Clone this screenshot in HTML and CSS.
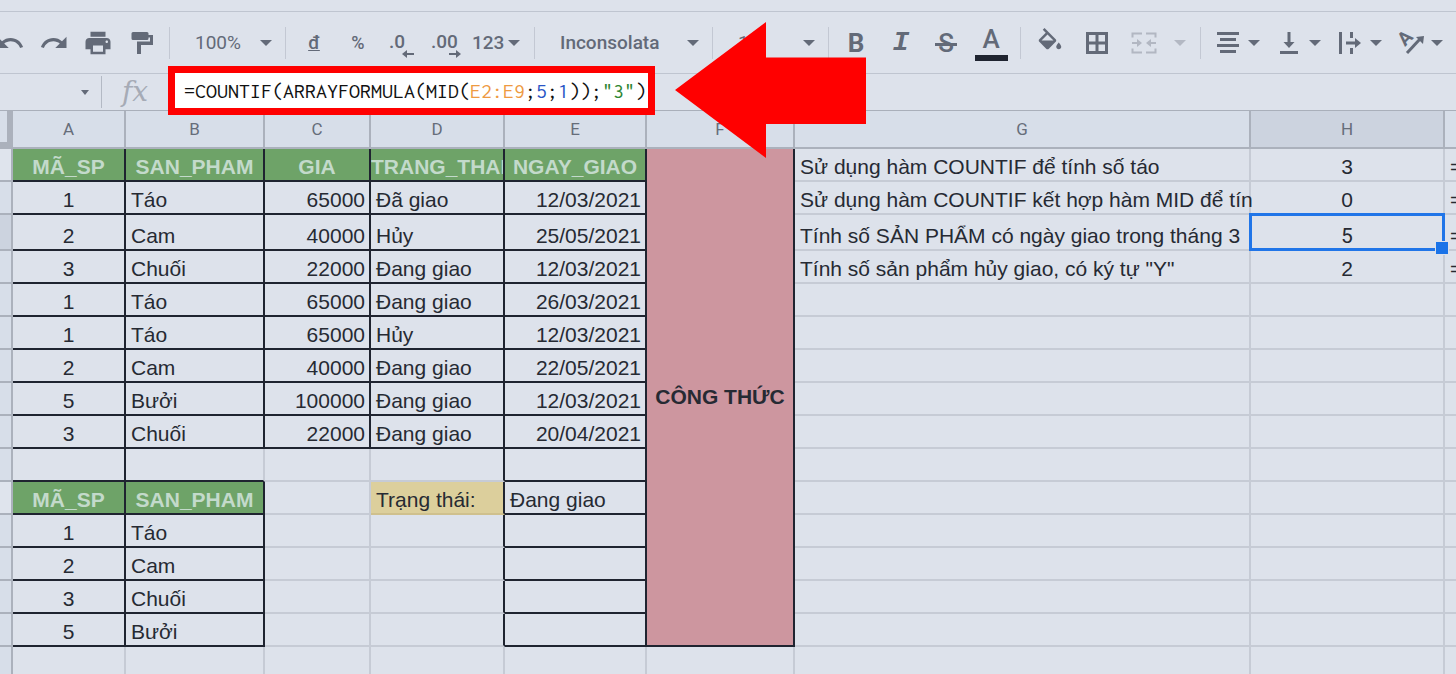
FILE: index.html
```html
<!DOCTYPE html>
<html lang="vi">
<head>
  <meta charset="UTF-8" />
  <meta name="viewport" content="width=device-width, initial-scale=1.0"/>
  <title>Hàm COUNTIF</title>
  <link rel="stylesheet" href="styles.css">
</head>
<body>

  <!-- Toolbar -->
  <div class="toolbar" role="toolbar">
    <div class="group">
      <button class="tool" aria-label="Hoàn tác">
        <svg class="icon" viewBox="0 0 24 24"><path d="M12.5 8c-2.65 0-5.05.99-6.9 2.6L2 7v9h9l-3.62-3.62c1.39-1.16 3.16-1.88 5.12-1.88 3.54 0 6.55 2.31 7.6 5.5l2.37-.78C21.08 11.03 17.15 8 12.5 8z"/></svg>
      </button>
      <button class="tool" aria-label="Làm lại">
        <svg class="icon" viewBox="0 0 24 24"><path d="M18.4 10.6C16.55 8.99 14.15 8 11.5 8c-4.65 0-8.58 3.03-9.96 7.22L3.9 16c1.05-3.19 4.05-5.5 7.6-5.5 1.95 0 3.73.72 5.12 1.88L13 16h9V7l-3.6 3.6z"/></svg>
      </button>
      <button class="tool" aria-label="In">
        <svg class="icon" viewBox="0 0 24 24"><path d="M19 8H5c-1.66 0-3 1.34-3 3v6h4v4h12v-4h4v-6c0-1.66-1.34-3-3-3zm-3 11H8v-5h8v5zm3-7c-.55 0-1-.45-1-1s.45-1 1-1 1 .45 1 1-.45 1-1 1zm-1-9H6v4h12V3z"/></svg>
      </button>
      <button class="tool" aria-label="Sao chép định dạng">
        <svg class="icon" viewBox="0 0 30 30"><path d="M6 4h14a1.500 1.500 0 0 1 1.500 1.500V7H26v10H14v9h-4V13.500h13V9.500h-1.500v1A1.500 1.500 0 0 1 20 12H6a1.500 1.500 0 0 1-1.500-1.500v-5A1.500 1.500 0 0 1 6 4z"/></svg>
      </button>
    </div>

    <div class="group">
      <label class="drop zoom"><select aria-label="Thu phóng"><option>100%</option></select></label>
    </div>

    <div class="group">
      <button class="tool currency" aria-label="Tiền tệ">đ</button>
      <button class="tool percent" aria-label="Phần trăm">%</button>
      <button class="tool" aria-label="Giảm số thập phân">
        <svg class="icon" viewBox="0 0 30 30"><text x="2" y="20">.0</text><path d="M15 26l5-4v3h7v2h-7v3z"/></svg>
      </button>
      <button class="tool" aria-label="Tăng số thập phân">
        <svg class="icon" viewBox="0 0 30 30"><text x="0" y="20">.00</text><path d="M30 26l-5-4v3h-7v2h7v3z"/></svg>
      </button>
      <button class="formats">123<span class="caret"></span></button>
    </div>

    <div class="group">
      <label class="drop font"><select aria-label="Phông chữ"><option>Inconsolata</option></select></label>
    </div>

    <div class="group">
      <label class="drop size"><select aria-label="Cỡ chữ"><option>15</option></select></label>
    </div>

    <div class="group text-style">
      <button class="tool bold">B</button>
      <button class="tool italic">I</button>
      <button class="tool strike"><span>S</span></button>
      <button class="tool color"><span>A</span></button>
    </div>

    <div class="group cell-style">
      <button class="tool" aria-label="Màu nền">
        <svg class="icon" viewBox="0 0 24 24"><path d="M16.560 8.940L7.620 0 6.210 1.410l2.380 2.380-5.150 5.150c-.59.59-.59 1.540 0 2.120l5.500 5.500c.29.290.68.440 1.060.440s.770-.150 1.060-.440l5.500-5.500c.590-.580.590-1.530 0-2.120zM5.210 10L10 5.210 14.790 10zM19 11.500s-2 2.170-2 3.500c0 1.100.9 2 2 2s2-.9 2-2c0-1.330-2-3.500-2-3.500z"/></svg>
      </button>
      <button class="tool" aria-label="Đường viền">
        <svg class="icon" viewBox="0 0 30 30"><path class="line" d="M5.500 5.500h19v19h-19zM15 5v20M5 15h20"/></svg>
      </button>
      <button class="tool faded" aria-label="Hợp nhất ô">
        <svg class="icon" viewBox="0 0 30 30"><path class="thin" d="M3.500 9.500V5.500H13M17 5.500h9.500v4M3.500 20.500v4H13M17 24.500h9.500v-4M3 15h7M27 15h-7"/><path d="M8 11l5 4-5 4zM22 11l-5 4 5 4z"/></svg>
      </button>
      <button class="more faded" aria-label="Kiểu hợp nhất"><span class="caret"></span></button>
    </div>

    <div class="group align">
      <button class="split" aria-label="Căn ngang">
        <svg class="icon" viewBox="0 0 30 30"><path class="line" d="M4 5.500h22M7 11.500h16M4 17.500h22M7 23.500h16"/></svg><span class="caret"></span>
      </button>
      <button class="split" aria-label="Căn dọc">
        <svg class="icon" viewBox="0 0 30 30"><path class="line" d="M15 4v12M6 24.500h18"/><path d="M9.500 14h11L15 20z"/></svg><span class="caret"></span>
      </button>
      <button class="split" aria-label="Xuống dòng">
        <svg class="icon" viewBox="0 0 30 30"><path class="line" d="M5.500 4v22M16.500 4v6M16.500 20v6M11 15h11"/><path d="M20 10l6 5-6 5z"/></svg><span class="caret"></span>
      </button>
      <button class="split" aria-label="Xoay văn bản">
        <svg class="icon" viewBox="0 0 30 30"><text class="turned" x="9" y="19" transform="rotate(-45 9 19)">A</text><path class="line" d="M11 25L24 11"/><path d="M20 9l8-1-1 8z"/></svg><span class="caret"></span>
      </button>
    </div>
  </div>

  <!-- Formula bar -->
  <div class="formula-bar">
    <button class="name-box" aria-label="Hộp tên"><span class="caret small"></span></button>
    <span class="fx">fx</span>
    <div class="formula" role="textbox" aria-label="Công thức">=COUNTIF(ARRAYFORMULA(MID(<span class="range">E2:E9</span>;<span class="num">5</span>;<span class="num">1</span>));<span class="str">"3"</span>)</div>
  </div>

  <!-- Sheet -->
  <table class="sheet">
    <colgroup>
      <col class="col-row"><col class="col-a"><col class="col-b"><col class="col-c"><col class="col-d">
      <col class="col-e"><col class="col-f"><col class="col-g"><col class="col-h"><col class="col-i">
    </colgroup>
    <thead>
      <tr><th class="corner"></th><th>A</th><th>B</th><th>C</th><th>D</th><th>E</th><th>F</th><th>G</th><th class="active">H</th><th class="last"></th></tr>
    </thead>
    <tbody>
      <tr>
        <th class="light"></th>
        <td class="box head">MÃ_SP</td><td class="box head">SAN_PHAM</td><td class="box head">GIA</td><td class="box head">TRANG_THAI</td><td class="box head">NGAY_GIAO</td>
        <td class="box merged" rowspan="15">CÔNG THỨC</td>
        <td>Sử dụng hàm COUNTIF để tính số táo</td><td class="mid">3</td><td>=</td>
      </tr>
      <tr>
        <th></th>
        <td class="box mid">1</td><td class="box">Táo</td><td class="box right">65000</td><td class="box">Đã giao</td><td class="box right">12/03/2021</td>
        <td class="spill">Sử dụng hàm COUNTIF kết hợp hàm MID để tín</td><td class="mid">0</td><td>=</td>
      </tr>
      <tr class="tall">
        <th class="active"></th>
        <td class="box mid">2</td><td class="box">Cam</td><td class="box right">40000</td><td class="box">Hủy</td><td class="box right">25/05/2021</td>
        <td>Tính số SẢN PHẨM có ngày giao trong tháng 3</td><td class="mid selected">5</td><td>=</td>
      </tr>
      <tr>
        <th></th>
        <td class="box mid">3</td><td class="box">Chuối</td><td class="box right">22000</td><td class="box">Đang giao</td><td class="box right">12/03/2021</td>
        <td>Tính số sản phẩm hủy giao, có ký tự "Y"</td><td class="mid">2</td><td>=</td>
      </tr>
      <tr>
        <th></th>
        <td class="box mid">1</td><td class="box">Táo</td><td class="box right">65000</td><td class="box">Đang giao</td><td class="box right">26/03/2021</td>
        <td></td><td></td><td></td>
      </tr>
      <tr>
        <th></th>
        <td class="box mid">1</td><td class="box">Táo</td><td class="box right">65000</td><td class="box">Hủy</td><td class="box right">12/03/2021</td>
        <td></td><td></td><td></td>
      </tr>
      <tr>
        <th></th>
        <td class="box mid">2</td><td class="box">Cam</td><td class="box right">40000</td><td class="box">Đang giao</td><td class="box right">22/05/2021</td>
        <td></td><td></td><td></td>
      </tr>
      <tr>
        <th></th>
        <td class="box mid">5</td><td class="box">Bưởi</td><td class="box right">100000</td><td class="box">Đang giao</td><td class="box right">12/03/2021</td>
        <td></td><td></td><td></td>
      </tr>
      <tr>
        <th></th>
        <td class="box mid">3</td><td class="box">Chuối</td><td class="box right">22000</td><td class="box">Đang giao</td><td class="box right">20/04/2021</td>
        <td></td><td></td><td></td>
      </tr>
      <tr>
        <th></th>
        <td class="box"></td><td class="under"></td><td></td><td class="edge"></td><td class="box"></td>
        <td></td><td></td><td></td>
      </tr>
      <tr>
        <th class="light"></th>
        <td class="box head">MÃ_SP</td><td class="box head">SAN_PHAM</td><td></td><td class="edge status">Trạng thái:</td><td class="box">Đang giao</td>
        <td></td><td></td><td></td>
      </tr>
      <tr>
        <th></th>
        <td class="box mid">1</td><td class="box">Táo</td><td></td><td class="edge"></td><td class="box"></td>
        <td></td><td></td><td></td>
      </tr>
      <tr>
        <th></th>
        <td class="box mid">2</td><td class="box">Cam</td><td></td><td class="edge"></td><td class="box"></td>
        <td></td><td></td><td></td>
      </tr>
      <tr>
        <th></th>
        <td class="box mid">3</td><td class="box">Chuối</td><td></td><td class="edge"></td><td class="box"></td>
        <td></td><td></td><td></td>
      </tr>
      <tr>
        <th></th>
        <td class="box mid">5</td><td class="box">Bưởi</td><td></td><td class="edge"></td><td class="box"></td>
        <td></td><td></td><td></td>
      </tr>
      <tr><th></th><td></td><td></td><td></td><td></td><td></td><td></td><td></td><td></td><td></td></tr>
    </tbody>
  </table>

  <!-- Arrow pointing at the formula -->
  <svg class="pointer" viewBox="0 0 191 136"><path d="M0 68L91 0v35.500h100v66.500H91v34z"/></svg>

</body>
</html>
```
FILE: styles.css
```css
* {
  box-sizing: border-box;
}

body {
  margin: 0;
  padding-top: 11px;
  height: 100vh;
  overflow: hidden;
  position: relative;
  background: #dde2eb;
  color: #262a33;
  font-family: Roboto, sans-serif;
}

button,
select {
  margin: 0;
  padding: 0;
  border: none;
  background: none;
  color: #636a78;
  font: 500 19px Roboto, sans-serif;
}

/* Toolbar */
.toolbar {
  display: flex;
  align-items: center;
  height: 63px;
  border-top: 1px solid #bfc5d0;
  border-bottom: 1px solid #bfc5d0;
  overflow: hidden;
}

.group {
  display: flex;
  flex-shrink: 0;
  align-items: center;
  height: 32px;
  padding: 0 6px;
}

.group + .group {
  border-left: 1px solid #c3c8d3;
}

.group:first-child {
  margin-left: -12px;
  padding: 0 5px 0 0;
}

.tool {
  display: flex;
  align-items: center;
  justify-content: center;
  width: 44px;
  height: 44px;
}

.icon {
  width: 30px;
  height: 30px;
  flex-shrink: 0;
  overflow: visible;
  fill: #636a78;
}

.icon text {
  font: 500 19px Roboto, sans-serif;
}

.icon .turned {
  font-weight: bold;
}

.line,
.thin {
  fill: none;
  stroke: #636a78;
  stroke-width: 3;
}

.thin {
  stroke-width: 2;
}

.caret {
  display: block;
  flex-shrink: 0;
  border: 6px solid transparent;
  border-top-color: #636a78;
  border-bottom: none;
}

.caret.small {
  border-width: 5px 4px 0;
}

.faded {
  opacity: 0.35;
}

.drop {
  display: flex;
  position: relative;
}

.drop select {
  appearance: none;
  width: 100%;
  height: 32px;
  padding-left: 19px;
  font-weight: normal;
}

.drop::after {
  content: "";
  position: absolute;
  right: 7px;
  top: 13px;
  border: 6px solid transparent;
  border-top-color: #636a78;
  border-bottom: none;
  pointer-events: none;
}

.zoom,
.size {
  width: 103px;
}

.font {
  width: 165px;
}

.drop.font select {
  font-weight: 500;
}

.currency {
  text-decoration: underline;
}

.percent {
  font-size: 18px;
}

.formats {
  display: flex;
  align-items: center;
  gap: 4px;
  width: 60px;
  padding-left: 4px;
}

.text-style {
  gap: 1px;
  padding: 0 7px 0 5px;
}

.bold {
  font-size: 26px;
  font-weight: bold;
}

.italic {
  font: italic bold 28px "Liberation Mono", monospace;
}

.strike {
  font-size: 26px;
}

.strike span {
  position: relative;
}

.strike span::after {
  content: "";
  position: absolute;
  left: -3px;
  right: -3px;
  top: 15px;
  height: 3px;
  background: #636a78;
}

.color {
  font-size: 26px;
}

.color span {
  width: 33px;
  line-height: 26px;
  padding: 2px 0 3px;
  border-bottom: 6px solid #1f2430;
}

.cell-style {
  gap: 3px;
  padding: 0 9px 0 7px;
}

.more {
  display: flex;
  width: 22px;
  padding-left: 5px;
}

.align {
  gap: 5px;
  padding-left: 12px;
}

.split {
  display: flex;
  align-items: center;
  gap: 5px;
  width: 56px;
}

/* Formula bar */
.formula-bar {
  display: flex;
  align-items: center;
  height: 37px;
  position: relative;
  border-bottom: 1px solid #a9afba;
}

.name-box {
  display: flex;
  align-items: center;
  justify-content: flex-end;
  width: 102px;
  height: 32px;
  padding-right: 12px;
  border-right: 1px solid #b3b9c4;
}

.fx {
  margin-left: 20px;
  color: #a6abb6;
  font: italic 28px/32px "DejaVu Serif", "Liberation Serif", serif;
}

.formula {
  position: absolute;
  left: 168px;
  top: -8px;
  height: 49px;
  padding: 0 2px 0 9px;
  border: 7px solid #f00;
  background: #fff;
  color: #111;
  font: 22px/36px Inconsolata, "Liberation Mono", monospace;
  white-space: nowrap;
}

.range {
  color: #ee9a42;
}

.num {
  color: #2a56c6;
}

.str {
  color: #2e8632;
}

/* Sheet */
.sheet {
  width: 100%;
  table-layout: fixed;
  border-spacing: 0;
}

.col-row { width: 13px; }
.col-a { width: 113px; }
.col-b { width: 139px; }
.col-c { width: 106px; }
.col-d { width: 134px; }
.col-e { width: 142px; }
.col-f { width: 148px; }
.col-h { width: 194px; }
.col-i { width: 11px; }

.sheet tr {
  height: 33px;
}

.sheet thead tr {
  height: 38px;
}

.sheet .tall {
  height: 36px;
}

.sheet th {
  padding: 0;
  background: #d7dee9;
  border: solid #abb1bc;
  border-width: 0 2px 2px 0;
  color: #666d7a;
  font-size: 17px;
  font-weight: normal;
}

.sheet .active {
  background: #ccd3df;
}

.sheet .light {
  background: #dfe4ed;
}

.sheet .corner {
  border-width: 0 6px 7px 0;
}

.sheet .last {
  border-right: none;
}

.sheet td {
  padding: 0 4px 1px 5px;
  overflow: hidden;
  border: solid #c6cbd5;
  border-width: 0 2px 2px 0;
  font: 21px/24px "Liberation Sans", Arial, sans-serif;
  vertical-align: bottom;
  white-space: nowrap;
}

.sheet td:last-child {
  padding-right: 0;
  border-right: none;
}

.sheet .box {
  border-color: #1f2430;
}

.sheet .edge {
  border-right-color: #1f2430;
}

.sheet .under {
  border-bottom-color: #1f2430;
}

.sheet .mid,
.sheet .head,
.sheet .merged {
  padding-left: 0;
  padding-right: 0;
  text-align: center;
}

.sheet .right {
  text-align: right;
}

.sheet .spill {
  overflow: visible;
}

.sheet .head {
  background: #6ea368;
  color: #c3dacb;
  font-weight: bold;
}

.sheet .merged {
  background: #cd969f;
  font-weight: bold;
  vertical-align: middle;
}

.sheet .status {
  background: #dccf9c;
  border-bottom-color: #cfc08d;
}

.sheet .selected {
  position: relative;
  overflow: visible;
  font-family: Roboto, sans-serif;
}

.selected::before {
  content: "";
  position: absolute;
  inset: -2px;
  border: 3px solid #2075e8;
}

.selected::after {
  content: "";
  position: absolute;
  right: -6px;
  bottom: -6px;
  width: 12px;
  height: 12px;
  border: 1px solid #dde2eb;
  background: #1a73e8;
}

/* Arrow */
.pointer {
  position: absolute;
  left: 675px;
  top: 22px;
  width: 191px;
  height: 136px;
  fill: #f00;
}
```
